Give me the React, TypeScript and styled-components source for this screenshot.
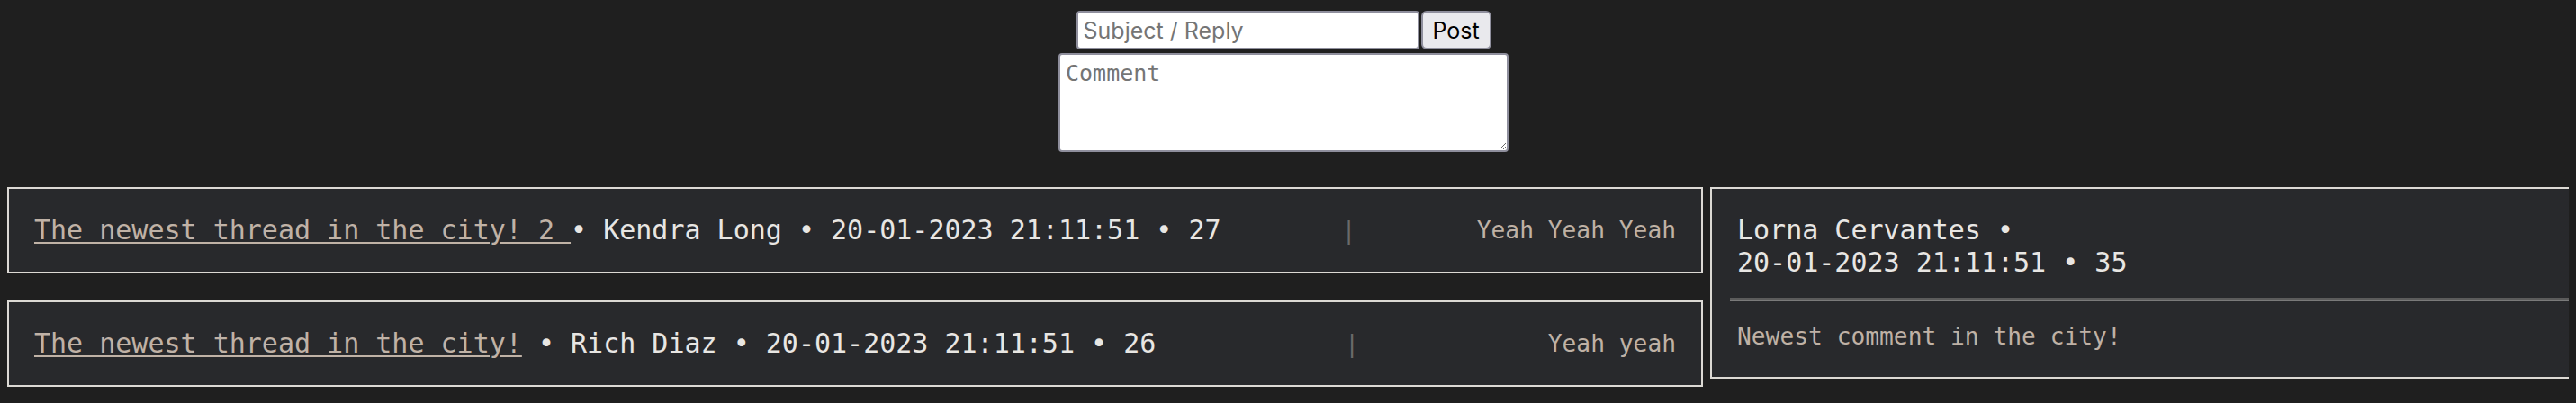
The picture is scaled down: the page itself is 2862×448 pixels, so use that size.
import React from "react";
import styled, { createGlobalStyle } from "styled-components";

const Global = createGlobalStyle`
  html, body { margin: 0; padding: 0; background: #1f1f1f; overflow: hidden; }
  body { margin: 8px; font-family: "DejaVu Sans Mono", monospace; color: #e8e6e3; }
`;

const Page = styled.div`
  display: flex;
  flex-direction: column;
`;

const Form = styled.form`
  display: flex;
  flex-direction: column;
  align-items: center;
  gap: 4px;
  padding: 4px 10px 0 0;
`;

const InputRow = styled.div`
  display: flex;
  gap: 2px;
`;

const SubjectInput = styled.input`
  box-sizing: border-box;
  width: 381px;
  height: 43px;
  padding: 0 6px;
  border: 2px solid #8f8f9d;
  border-radius: 4px;
  background: #ffffff;
  font-family: Inter, "Liberation Sans", Arial, sans-serif;
  font-size: 25px;
  color: #000;
  &::placeholder { color: #757575; }
`;

const PostButton = styled.button`
  box-sizing: border-box;
  width: 78px;
  height: 43px;
  padding: 0;
  border: 2px solid #8f8f9d;
  border-radius: 6px;
  background: #e9e9ed;
  font-family: Inter, "Liberation Sans", Arial, sans-serif;
  font-size: 25px;
  color: #000;
`;

const CommentArea = styled.textarea`
  box-sizing: border-box;
  width: 500px;
  height: 110px;
  padding: 6px 6px;
  border: 2px solid #8f8f9d;
  border-radius: 4px;
  background: #ffffff;
  font-family: "DejaVu Sans Mono", monospace;
  font-size: 25px;
  &::placeholder { color: #757575; }
`;

const Board = styled.div`
  display: grid;
  grid-template-columns: 1884px 1884px;
  gap: 8px;
  margin-top: 39px;
  align-items: start;
`;

const ThreadList = styled.div`
  display: flex;
  flex-direction: column;
  gap: 30px;
`;

const ThreadCard = styled.div`
  display: flex;
  justify-content: space-between;
  align-items: center;
  padding: 28px;
  border: 2px solid #dcd9d4;
  background: #28292c;
`;

const Meta = styled.span`
  font-size: 30px;
  line-height: 36px;
  color: #e8e6e3;
  white-space: pre-wrap;
`;

const TitleLink = styled.a`
  color: #c0b2a6;
  text-decoration: underline;
  text-decoration-thickness: 2px;
  text-underline-offset: 3px;
`;

const Sep = styled.span`
  font-size: 26px;
  color: #6a6a6a;
`;

const ReplyText = styled.span`
  font-size: 26.25px;
  color: #bfb1a5;
`;

const ReplyPanel = styled.div`
  display: flex;
  flex-direction: column;
  padding: 28px 20px 30px;
  border: 2px solid #dcd9d4;
  background: #28292c;
`;

const ReplyHeader = styled.div`
  display: flex;
  flex-direction: column;
  padding: 0 8px;
  font-size: 30px;
  line-height: 36px;
  color: #e8e6e3;
`;

const Divider = styled.hr`
  margin: 21px 0 24px;
  height: 0;
  border: none;
  border-top: 2px solid #5b5b5b;
  border-bottom: 2px solid #7a7a7a;
`;

const ReplyBody = styled.div`
  padding: 0 8px;
  font-size: 26.25px;
  color: #bfb1a5;
`;

const threads = [
  { title: "The newest thread in the city! 2 ", author: "Kendra Long", date: "20-01-2023 21:11:51", count: 27, reply: "Yeah Yeah Yeah" },
  { title: "The newest thread in the city!", author: "Rich Diaz", date: "20-01-2023 21:11:51", count: 26, reply: "Yeah yeah" },
];

export default function App() {
  return (
    <Page>
      <Global />
      <Form onSubmit={(e) => e.preventDefault()}>
        <InputRow>
          <SubjectInput placeholder="Subject / Reply" />
          <PostButton type="submit">Post</PostButton>
        </InputRow>
        <CommentArea placeholder="Comment" />
      </Form>
      <Board>
        <ThreadList>
          {threads.map((t, i) => (
            <ThreadCard key={i}>
              <Meta>
                <TitleLink href="#">{t.title}</TitleLink>
                {t.title.endsWith(" ") ? "" : " "}• {t.author} • {t.date} • {t.count}
              </Meta>
              <Sep>|</Sep>
              <ReplyText>{t.reply}</ReplyText>
            </ThreadCard>
          ))}
        </ThreadList>
        <ReplyPanel>
          <ReplyHeader>
            <span>Lorna Cervantes •</span>
            <span>20-01-2023 21:11:51 • 35</span>
          </ReplyHeader>
          <Divider />
          <ReplyBody>Newest comment in the city!</ReplyBody>
        </ReplyPanel>
      </Board>
    </Page>
  );
}
